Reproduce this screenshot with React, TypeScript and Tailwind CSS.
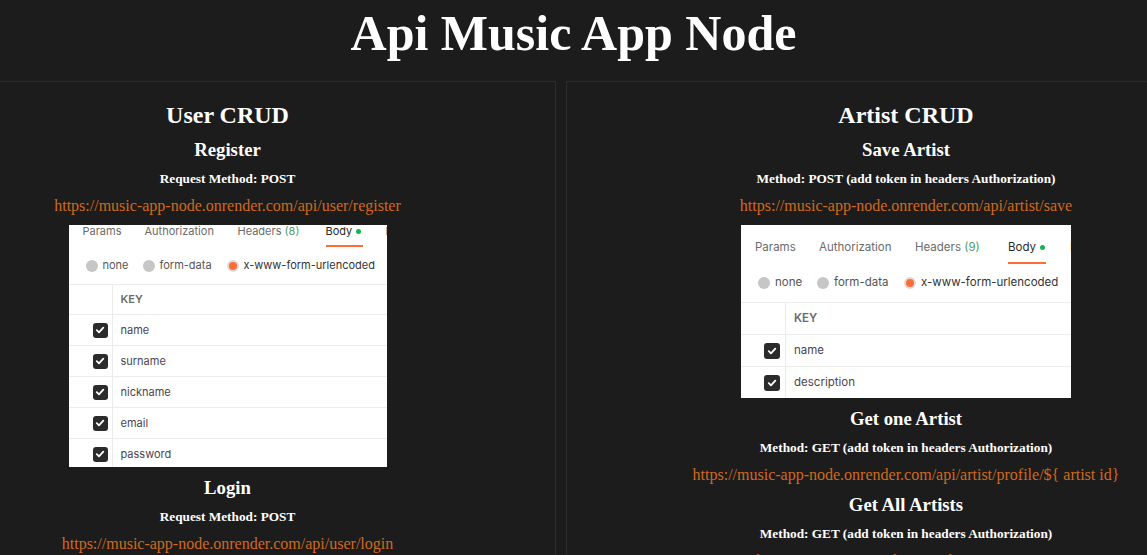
import React from "react";

function Check({ size }: { size: "sm" | "md" }) {
  return (
    <div
      className={
        size === "sm"
          ? "w-[15px] h-[15px] rounded-[3px] bg-[#2b2b2b] flex items-center justify-center"
          : "w-[16px] h-[16px] rounded-[3px] bg-[#2b2b2b] flex items-center justify-center"
      }
    >
      <svg width="10" height="10" viewBox="0 0 10 10">
        <path d="M1.8 5.2 L4 7.3 L8.3 2.6" fill="none" stroke="#fff" strokeWidth="1.8" strokeLinecap="round" strokeLinejoin="round" />
      </svg>
    </div>
  );
}

function Radio({ active }: { active?: boolean }) {
  return active ? (
    <div className="w-[12px] h-[12px] rounded-full bg-[#dcdcdc] flex items-center justify-center shrink-0">
      <div className="w-[8px] h-[8px] rounded-full bg-[#ff6c37]" />
    </div>
  ) : (
    <div className="w-[12px] h-[12px] rounded-full bg-[#c6c6c6] shrink-0" />
  );
}

function PostmanLeft() {
  const rows = ["name", "surname", "nickname", "email", "password"];
  return (
    <div className="w-[318px] h-[242px] bg-white overflow-hidden flex flex-col font-['Inter',sans-serif] text-[11px] shrink-0">
      <div className="h-[22px] flex pl-[14px] text-[#6b6b6b] shrink-0 whitespace-nowrap">
        <span className="w-[62px] leading-[13px] shrink-0">Params</span>
        <span className="w-[93px] leading-[13px] shrink-0">Authorization</span>
        <span className="w-[88px] leading-[13px] shrink-0">
          Headers <span className="text-[#4d9e6a]">(8)</span>
        </span>
        <div className="w-[60px] flex flex-col shrink-0">
          <div className="flex items-center leading-[13px] text-[#2a2a2a]">
            Body<span className="ml-[4px] w-[5px] h-[5px] rounded-full bg-[#14b550]" />
          </div>
          <div className="mt-[7px] h-[2px] w-[37px] bg-[#ff6c37]" />
        </div>
        <span className="leading-[13px] shrink-0">Pre-request Script</span>
      </div>
      <div className="h-[37px] flex items-center pl-[17px] text-[#555] shrink-0 whitespace-nowrap">
        <div className="w-[57px] flex items-center gap-[5px] shrink-0">
          <Radio />
          <span>none</span>
        </div>
        <div className="w-[84px] flex items-center gap-[5px] shrink-0">
          <Radio />
          <span>form-data</span>
        </div>
        <div className="flex items-center gap-[5px] shrink-0">
          <Radio active />
          <span className="text-[#333]">x-www-form-urlencoded</span>
        </div>
      </div>
      <div className="h-[30px] flex border-t border-[#ececec] shrink-0">
        <div className="w-[44px] border-r border-[#ececec] shrink-0" />
        <div className="pl-[8px] flex items-center font-semibold text-[#6b6b6b]">KEY</div>
      </div>
      {rows.map((r) => (
        <div key={r} className="h-[31px] flex border-t border-[#ececec] shrink-0">
          <div className="w-[44px] border-r border-[#ececec] shrink-0 flex items-center pl-[24px]">
            <Check size="sm" />
          </div>
          <div className="pl-[8px] flex items-center text-[#4a4550]">{r}</div>
        </div>
      ))}
    </div>
  );
}

function PostmanRight() {
  const rows = ["name", "description"];
  return (
    <div className="w-[330px] h-[173px] bg-white overflow-hidden flex flex-col font-['Inter',sans-serif] text-[11.5px] shrink-0">
      <div className="h-[39px] flex pl-[14px] pt-[15px] text-[#6b6b6b] shrink-0 whitespace-nowrap">
        <span className="w-[64px] leading-[14px] shrink-0">Params</span>
        <span className="w-[96px] leading-[14px] shrink-0">Authorization</span>
        <span className="w-[93px] leading-[14px] shrink-0">
          Headers <span className="text-[#4d9e6a]">(9)</span>
        </span>
        <div className="w-[62px] flex flex-col shrink-0">
          <div className="flex items-center leading-[14px] text-[#2a2a2a]">
            Body<span className="ml-[4px] w-[5px] h-[5px] rounded-full bg-[#14b550]" />
          </div>
          <div className="mt-[8px] h-[2px] w-[38px] bg-[#ff6c37]" />
        </div>
        <span className="leading-[14px] shrink-0">Pre-request Script</span>
      </div>
      <div className="h-[38px] flex items-center pl-[17px] text-[#555] shrink-0 whitespace-nowrap">
        <div className="w-[59px] flex items-center gap-[5px] shrink-0">
          <Radio />
          <span>none</span>
        </div>
        <div className="w-[87px] flex items-center gap-[5px] shrink-0">
          <Radio />
          <span>form-data</span>
        </div>
        <div className="flex items-center gap-[5px] shrink-0">
          <Radio active />
          <span className="text-[#333]">x-www-form-urlencoded</span>
        </div>
      </div>
      <div className="h-[32px] flex border-t border-[#ececec] shrink-0">
        <div className="w-[45px] border-r border-[#ececec] shrink-0" />
        <div className="pl-[8px] flex items-center font-semibold text-[#6b6b6b]">KEY</div>
      </div>
      {rows.map((r) => (
        <div key={r} className="h-[32px] flex border-t border-[#ececec] shrink-0">
          <div className="w-[45px] border-r border-[#ececec] shrink-0 flex items-center pl-[23px]">
            <Check size="md" />
          </div>
          <div className="pl-[8px] flex items-center text-[#4a4550]">{r}</div>
        </div>
      ))}
    </div>
  );
}

function H2({ children }: { children: React.ReactNode }) {
  return <h2 className="text-[24px] leading-[28px] font-bold whitespace-nowrap">{children}</h2>;
}
function H3({ children }: { children: React.ReactNode }) {
  return <h3 className="text-[18.72px] leading-[22px] font-bold whitespace-nowrap">{children}</h3>;
}
function H5({ children }: { children: React.ReactNode }) {
  return <h5 className="text-[13.28px] leading-[16px] font-bold whitespace-nowrap">{children}</h5>;
}
function Url({ children }: { children: React.ReactNode }) {
  return <p className="text-[16px] leading-[18px] text-[#d2691e] whitespace-nowrap">{children}</p>;
}

export default function App() {
  return (
    <div className="w-[1147px] h-[555px] overflow-hidden bg-[#1c1c1c] text-white font-['Liberation_Serif','Times_New_Roman',serif] flex flex-col">
      <header className="h-[81px] shrink-0 flex justify-center pt-[4px]">
        <h1 className="text-[50px] leading-[58px] font-bold whitespace-nowrap">Api Music App Node</h1>
      </header>
      <div className="flex gap-[10px] flex-1 overflow-hidden">
        <section className="w-[556px] shrink-0 border-t border-r border-[#2d2d2d] overflow-hidden">
          <div className="w-[455px] flex flex-col items-center gap-[10px] pt-[19px]">
            <H2>User CRUD</H2>
            <H3>Register</H3>
            <H5>Request Method: POST</H5>
            <Url>https://music-app-node.onrender.com/api/user/register</Url>
            <PostmanLeft />
            <H3>Login</H3>
            <H5>Request Method: POST</H5>
            <Url>https://music-app-node.onrender.com/api/user/login</Url>
          </div>
        </section>
        <section className="flex-1 border-t border-l border-[#2d2d2d] overflow-hidden">
          <div className="w-[678px] flex flex-col items-center gap-[10px] pt-[19px]">
            <H2>Artist CRUD</H2>
            <H3>Save Artist</H3>
            <H5>Method: POST (add token in headers Authorization)</H5>
            <Url>https://music-app-node.onrender.com/api/artist/save</Url>
            <PostmanRight />
            <H3>Get one Artist</H3>
            <H5>Method: GET (add token in headers Authorization)</H5>
            <Url>{"https://music-app-node.onrender.com/api/artist/profile/${ artist id}"}</Url>
            <H3>Get All Artists</H3>
            <H5>Method: GET (add token in headers Authorization)</H5>
            <Url>https://music-app-node.onrender.com/api/artist</Url>
          </div>
        </section>
      </div>
    </div>
  );
}
